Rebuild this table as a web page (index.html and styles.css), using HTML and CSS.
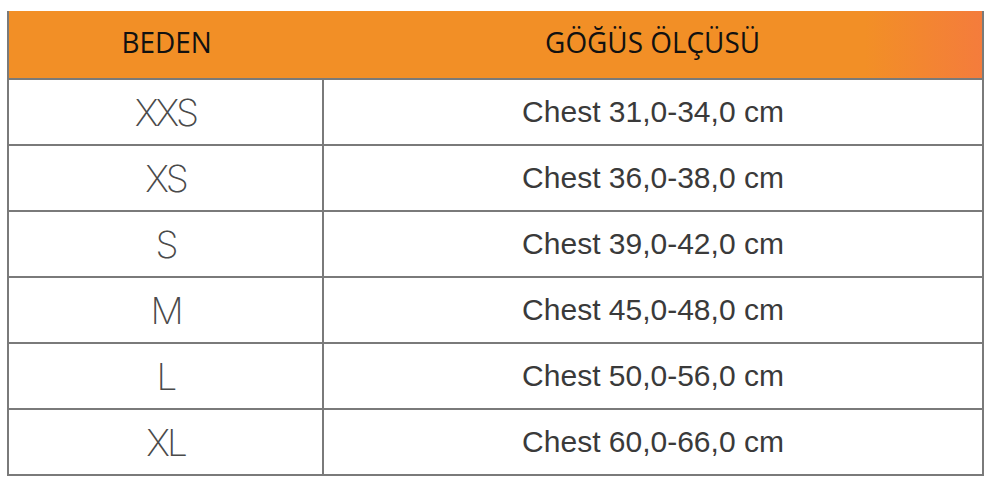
FILE: index.html
```html
<!DOCTYPE html>
<html lang="tr">
<head>
<meta charset="utf-8">
<title>Beden Tablosu</title>
<link rel="stylesheet" href="styles.css">
</head>
<body>
<div class="chart">
  <div class="row head">
    <div class="cell size-col"><span class="htext">BEDEN</span></div>
    <div class="cell"><span class="htext">GÖĞÜS ÖLÇÜSÜ</span></div>
  </div>
  <div class="row">
    <div class="cell size-col size">XXS</div>
    <div class="cell chest">Chest 31,0-34,0 cm</div>
  </div>
  <div class="row">
    <div class="cell size-col size">XS</div>
    <div class="cell chest">Chest 36,0-38,0 cm</div>
  </div>
  <div class="row">
    <div class="cell size-col size">S</div>
    <div class="cell chest">Chest 39,0-42,0 cm</div>
  </div>
  <div class="row">
    <div class="cell size-col size">M</div>
    <div class="cell chest">Chest 45,0-48,0 cm</div>
  </div>
  <div class="row">
    <div class="cell size-col size">L</div>
    <div class="cell chest">Chest 50,0-56,0 cm</div>
  </div>
  <div class="row">
    <div class="cell size-col size">XL</div>
    <div class="cell chest">Chest 60,0-66,0 cm</div>
  </div>
</div>
</body>
</html>
```

FILE: styles.css
```css
html, body {
  margin: 0;
  padding: 0;
  background: #ffffff;
}

.chart {
  margin: 11px 0 0 7px;
  width: 977px;
  border-left: 2px solid #7a7a7a;
  border-right: 2px solid #7a7a7a;
  border-bottom: 2px solid #7a7a7a;
  box-sizing: border-box;
}

.row {
  display: grid;
  grid-template-columns: 315px 1fr;
  height: 66px;
  border-top: 2px solid #7a7a7a;
  box-sizing: border-box;
}

.row.head {
  height: 67px;
  border-top: none;
  background: linear-gradient(90deg, #f28f26 0%, #f28f26 88%, #f47c3c 100%);
}

.cell {
  display: flex;
  align-items: center;
  justify-content: center;
}

.size-col {
  border-right: 2px solid #7a7a7a;
}

.head .size-col {
  border-right: none;
}

.head .cell {
  padding-bottom: 6px;
}

.htext {
  display: inline-block;
  font-family: "Open Sans", "Noto Sans", sans-serif;
  font-size: 30px;
  color: #111111;
  transform: scaleX(0.93);
}

.size {
  font-family: "Inter", "Liberation Sans", sans-serif;
  font-weight: 200;
  font-size: 37px;
  color: #4a4a4a;
  letter-spacing: -3px;
}

.chest {
  font-family: "Liberation Sans", Arial, sans-serif;
  font-size: 30px;
  color: #3a3a3a;
}
```
